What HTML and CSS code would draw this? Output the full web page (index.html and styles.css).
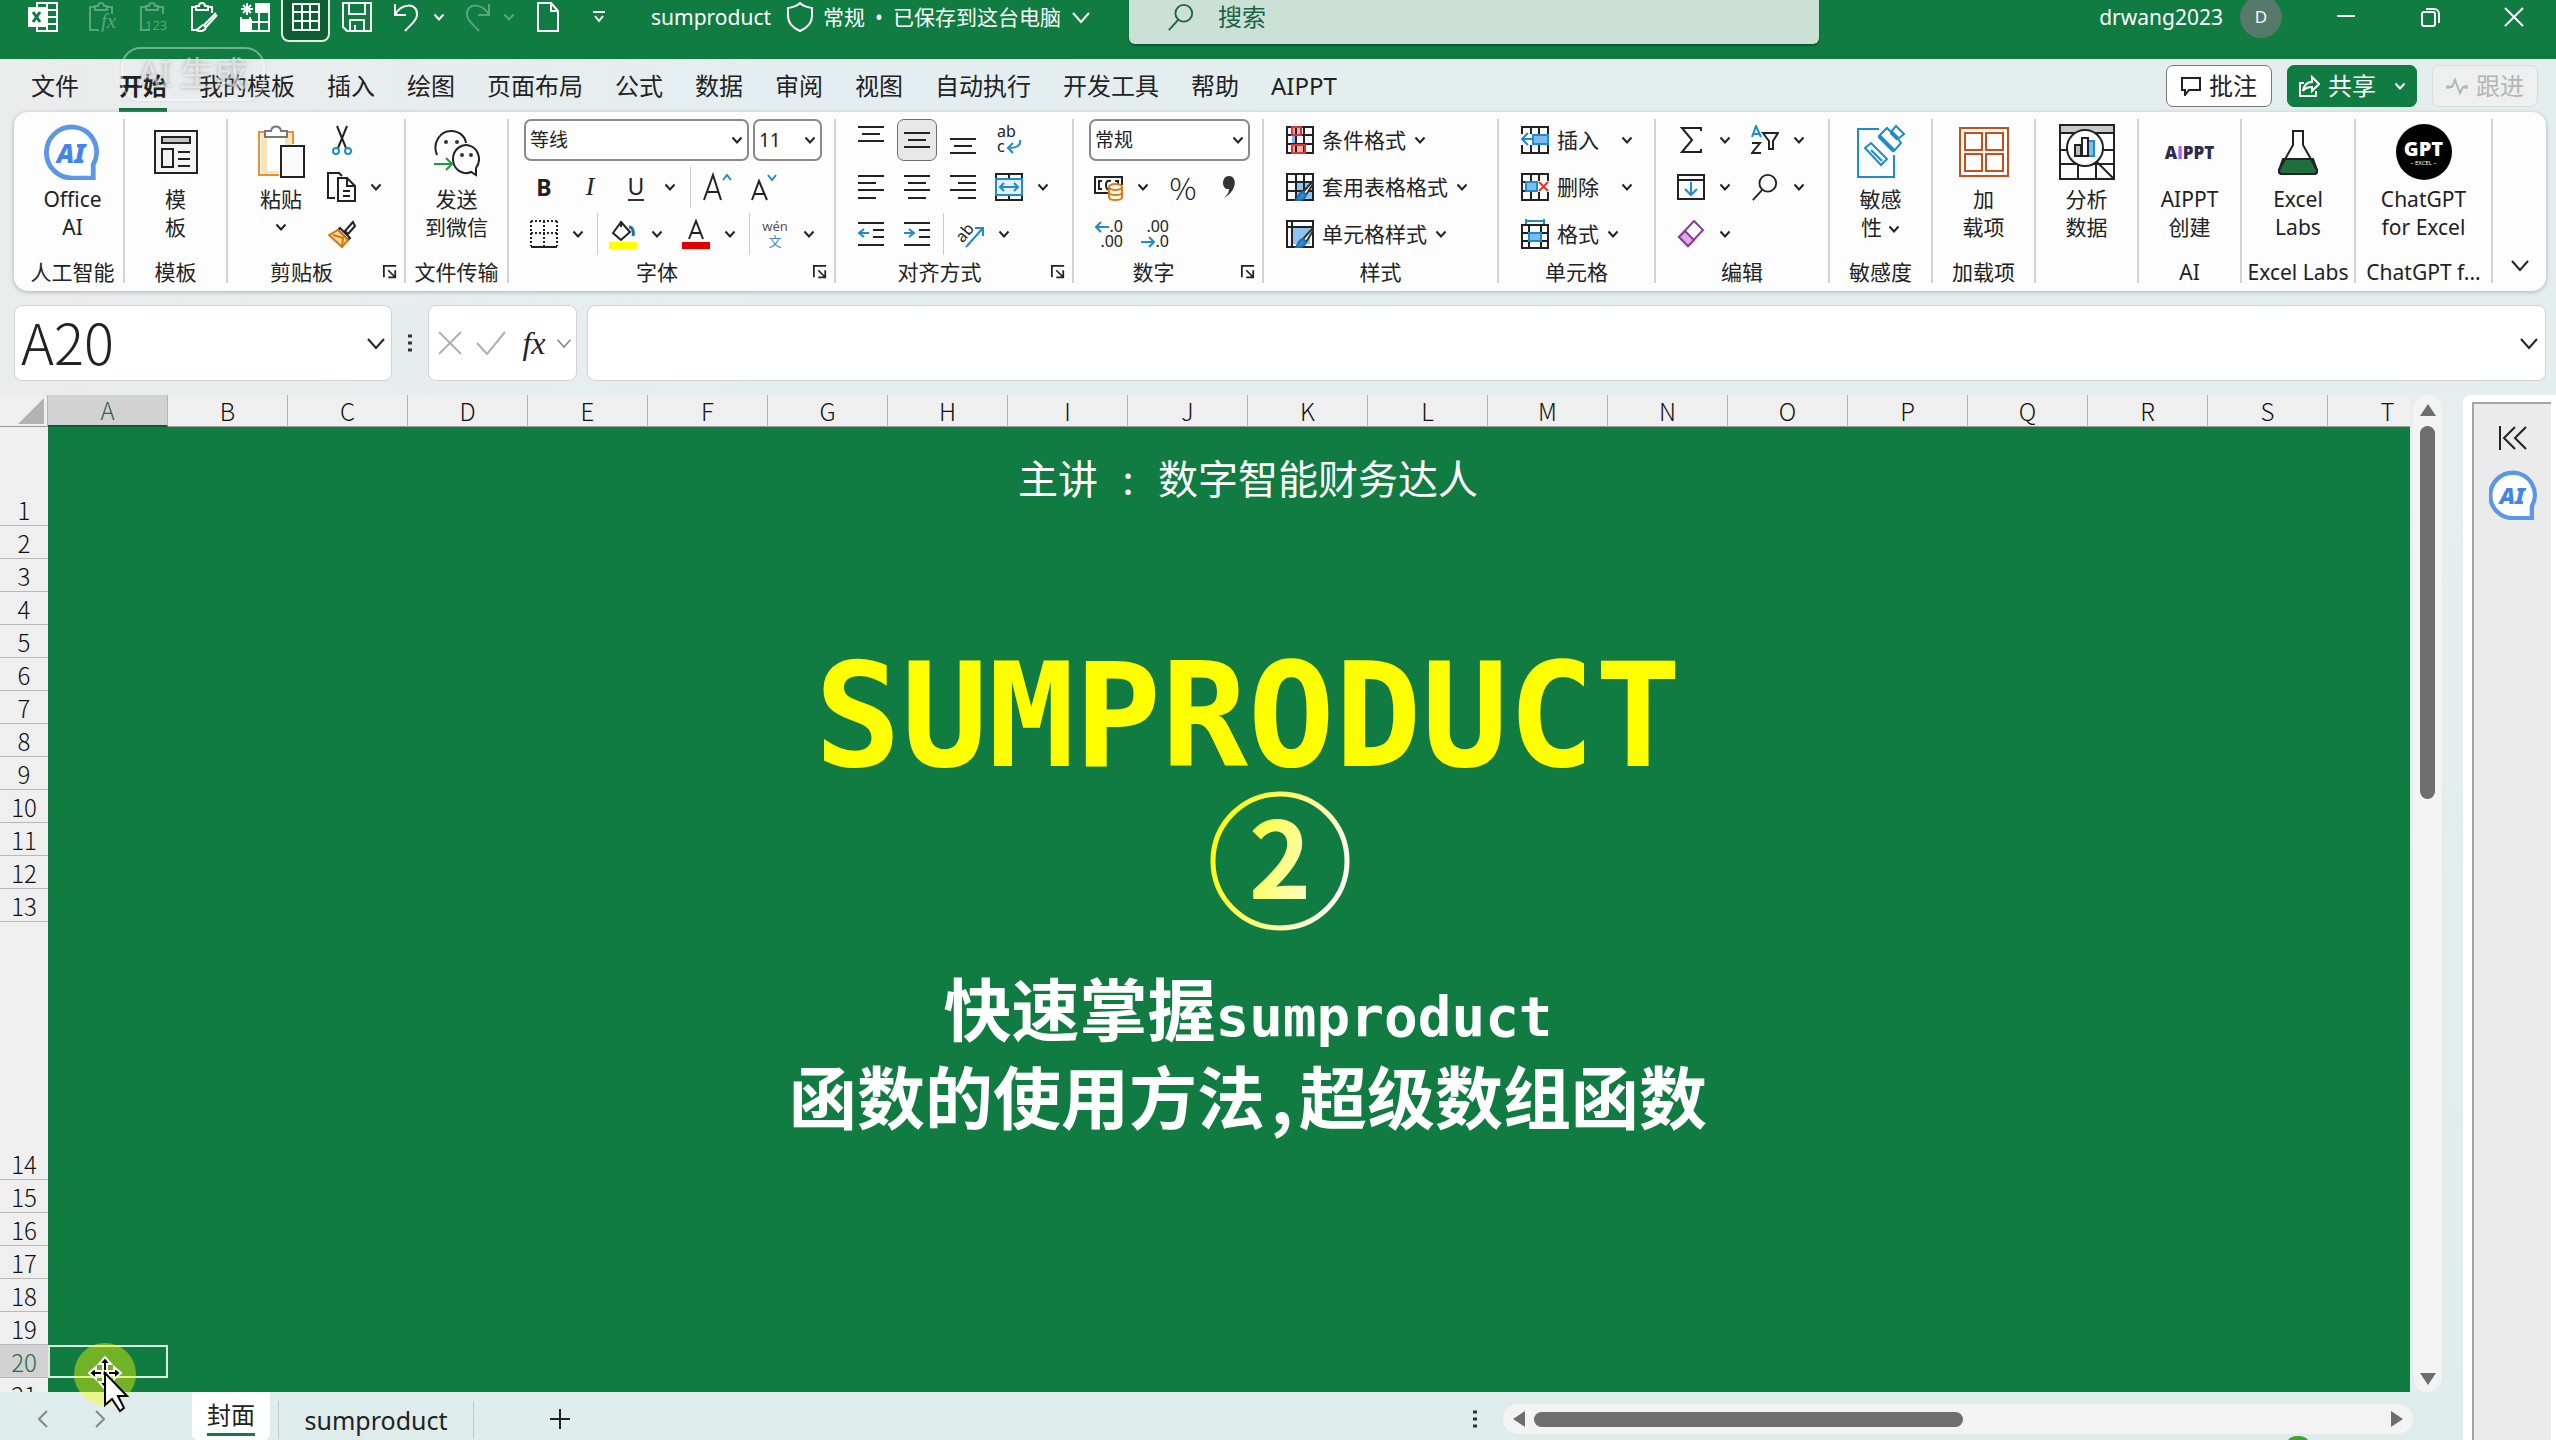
FILE: index.html
```html
<!DOCTYPE html>
<html lang="zh-CN">
<head>
    <meta charset="UTF-8">
    <title>sumproduct - Excel</title>
    <link rel="stylesheet" href="styles.css">
</head>
<body>

<svg class="defs" width="0" height="0" aria-hidden="true">
    <symbol id="chev" viewBox="0 0 12 12"><path d="M1.5 3.5 6 8.5l4.5-5"/></symbol>
    <symbol id="chev-big" viewBox="0 0 20 20"><path d="M2 6l8 9 8-9"/></symbol>
    <symbol id="launch" viewBox="0 0 16 16"><path d="M1 14V1h14M6 6l8 8M14 6v8H6"/></symbol>
    <symbol id="search" viewBox="0 0 28 30"><circle cx="17" cy="11" r="9"/><path d="M11 18 1 29"/></symbol>
    <symbol id="clip" viewBox="0 0 30 30"><path d="M8 5H3v23h9M20 5h5v7M8 8V4h3c0-4 6-4 6 0h3v4z"/></symbol>
    <symbol id="ai-logo" viewBox="0 0 56 58">
        <path d="M28 3a25 25 0 1 0 0 53h22V42A26 26 0 0 0 28 3z" fill="#fff" stroke="#5b97e8" stroke-width="5"/>
        <text x="27" y="40" text-anchor="middle" class="ai-logo-text">AI</text>
    </symbol>
    <symbol id="table-grid" viewBox="0 0 28 28"><path d="M1 1h26v26H1zM1 9h26M1 18h26M10 1v26M18 1v26"/></symbol>
    <symbol id="brush" viewBox="0 0 20 22"><path d="M18 2 9 12l3 3 7-11z" fill="#fff" stroke="#333"/><path d="M9 12c-4 0-4 4-7 8 5 1 9-1 10-5z" fill="#2e8ad0" stroke="#1f6fb0"/></symbol>
</svg>

<header class="titlebar">
    <div class="quick-access">
        <svg class="logo" viewBox="0 0 30 30" width="30" height="30"><path d="M9 1h20v28H9zM9 8h20M9 15h20M9 22h20M19 1v28" fill="none" stroke="#fff" stroke-width="2"/><path d="M0 6h17v18H0z" fill="#fff"/><path d="M5 10l7 10M12 10 5 20" stroke="#107c41" stroke-width="3"/></svg>
        <button class="dim" aria-label="粘贴公式"><svg width="30" height="30"><use href="#clip"/><text x="14" y="26" class="clip-fx">fx</text></svg></button>
        <button class="dim" aria-label="粘贴数值"><svg width="30" height="30"><use href="#clip"/><text x="7" y="28" class="clip-num">123</text></svg></button>
        <button aria-label="粘贴格式"><svg viewBox="0 0 30 30" width="30" height="30"><path d="M7 5H3v23h5M19 5h4v6M7 8V4h3c0-4 6-4 6 0h3v4zM27 11 15 23M28 13 17 25M15 23c-4 0-4 4-8 5 5 2 9 1 10-3z"/></svg></button>
        <button aria-label="冻结窗格"><svg viewBox="0 0 30 30" width="30" height="30"><path d="M15 2h14v27H1V15M1 20h28M10 15v14M19 10v19M15 10h14"/><path d="M16 2h13v8H16zM1 18h10v11H1z" fill="#fff"/><path d="M7 1v12M1 7h12M3 3l8 8M11 3l-8 8"/></svg></button>
        <button class="on" aria-label="网格"><svg width="28" height="28"><use href="#table-grid"/></svg></button>
        <button aria-label="保存"><svg viewBox="0 0 30 30" width="30" height="30"><path d="M1 1h28v28H5l-4-4zM7 1v11h16V1M8 29V18h14v11M13 29v-6"/></svg></button>
        <button class="split" aria-label="撤消"><svg viewBox="0 0 30 30" width="30" height="30"><path d="M3 2v11h11M3 13C8 1 26 0 25 13c0 6-7 10-12 16"/></svg><svg class="chev"><use href="#chev"/></svg></button>
        <button class="split dim" aria-label="恢复"><svg viewBox="0 0 30 30" width="30" height="30"><path d="M27 2v11H16M27 13C22 1 4 0 5 13c0 6 7 10 12 16"/></svg><svg class="chev"><use href="#chev"/></svg></button>
        <button aria-label="新建"><svg viewBox="0 0 22 30" width="22" height="30"><path d="M1 1h13l7 8v20H1zM14 1v8h7"/></svg></button>
        <button class="last" aria-label="自定义快速访问工具栏"><svg viewBox="0 0 14 14" width="14" height="14"><path d="M1 2h12M3 6l4 5 4-5"/></svg></button>
    </div>
    <div class="doc-name">
        <span>sumproduct</span>
        <svg viewBox="0 0 26 30" width="26" height="30"><path d="M13 1c4 4 7 4 12 5v8c0 8-5 12-12 15C6 26 1 22 1 14V6c5-1 8-1 12-5z"/></svg>
        <span>常规</span>
        <span>•</span>
        <span>已保存到这台电脑</span>
        <svg class="chev-big"><use href="#chev-big"/></svg>
    </div>
    <label class="search">
        <svg width="28" height="28"><use href="#search"/></svg>
        <input type="text" placeholder="搜索" aria-label="搜索">
    </label>
    <div class="account">
        <span>drwang2023</span>
        <span class="avatar">D</span>
    </div>
    <div class="window-controls">
        <button aria-label="最小化"><svg viewBox="0 0 20 20" width="20" height="20"><path d="M1 9h18"/></svg></button>
        <button aria-label="还原"><svg viewBox="0 0 20 20" width="20" height="20"><path d="M2 7a2 2 0 0 1 2-2h9a2 2 0 0 1 2 2v10a2 2 0 0 1-2 2H4a2 2 0 0 1-2-2zM6 2h8a5 5 0 0 1 5 5v9"/></svg></button>
        <button aria-label="关闭"><svg viewBox="0 0 20 20" width="20" height="20"><path d="M1 1l18 18M19 1 1 19"/></svg></button>
    </div>
</header>

<nav class="tabs">
    <button class="file">文件</button>
    <button class="active"><span>开始</span></button>
    <button>我的模板</button>
    <button>插入</button>
    <button>绘图</button>
    <button>页面布局</button>
    <button>公式</button>
    <button>数据</button>
    <button>审阅</button>
    <button>视图</button>
    <button>自动执行</button>
    <button>开发工具</button>
    <button>帮助</button>
    <button>AIPPT</button>
    <div class="actions">
        <button class="comments"><svg viewBox="0 0 20 20" width="20" height="20"><path d="M1 2h18v12H8l-4 5v-5H1z"/></svg>批注</button>
        <button class="share"><svg viewBox="0 0 22 22" width="22" height="22"><path d="M6 8H2v13h16v-5M5 16c1-6 4-9 9-9V2l7 7-7 7v-4c-4 0-7 1-9 4z"/></svg>共享<svg class="chev"><use href="#chev"/></svg></button>
        <button class="follow" disabled><svg viewBox="0 0 22 20" width="22" height="20"><path d="M2 11h4l3-7 5 13 3-6h3"/><circle cx="2" cy="11" r="1"/><circle cx="20" cy="11" r="1"/></svg>跟进</button>
    </div>
</nav>

<section class="ribbon">
    <div class="group g-ai">
        <div class="tools">
            <button class="large"><svg width="56" height="58"><use href="#ai-logo"/></svg><span>Office</span><span>AI</span></button>
        </div>
        <footer><span>人工智能</span></footer>
    </div>
    <div class="group g-template">
        <div class="tools">
            <button class="large"><svg viewBox="0 0 44 44" width="44" height="56"><path d="M1 1h42v42H1z" fill="#f4f4f4"/><path d="M8 7h28v6H8z" fill="#c4c4c4"/><path d="M8 19h11v18H8zM24 22h12M24 29h12M24 36h12"/></svg><span>模</span><span>板</span></button>
        </div>
        <footer><span>模板</span></footer>
    </div>
    <div class="group g-clipboard">
        <div class="tools">
            <button class="large paste"><svg viewBox="0 0 48 54" width="48" height="56"><path d="M8 7H2v43h20M30 7h6v12" stroke="#e8912d"/><path d="M8 9H4v39h18V22h12V9" fill="#fbe3b6" stroke="none"/><path d="M10 12h18v34H10z" fill="#fff" stroke="none"/><path d="M8 12V6h6c1-6 9-6 10 0h6v6z" fill="#fff" stroke="#777"/><path d="M24 21h23v31H24z" fill="#fafafa"/></svg><span>粘贴</span><svg class="chev"><use href="#chev"/></svg></button>
            <div class="rows">
                <div class="row"><button class="icon" aria-label="剪切"><svg viewBox="0 0 20 30" width="20" height="30"><path d="M5 1l9 22M15 1 6 23"/><circle cx="4" cy="26" r="3" stroke="#1e8bcd"/><circle cx="16" cy="26" r="3" stroke="#1e8bcd"/></svg></button></div>
                <div class="row"><button class="split" aria-label="复制"><svg viewBox="0 0 30 30" width="30" height="30"><path d="M8 26H1V1h11l3 3M11 6h9l8 8v15H11zM20 6v8h8M16 19h7M16 24h7"/></svg><svg class="chev"><use href="#chev"/></svg></button></div>
                <div class="row"><button class="icon" aria-label="格式刷"><svg viewBox="0 0 28 28" width="28" height="28"><path d="M25 2 17 11l3 3 7-8zM12 8l10 10-2 2L10 10z" fill="#fff"/><path d="M10 10 1 15l13 12 6-7z" fill="#fbd9a0" stroke="#d9760b"/><path d="M5 15l10 3-1 9" stroke="#d9760b"/></svg></button></div>
            </div>
        </div>
        <footer><span>剪贴板</span><button class="launch" aria-label="剪贴板选项"><svg width="14" height="14"><use href="#launch"/></svg></button></footer>
    </div>
    <div class="group g-wechat">
        <div class="tools">
            <button class="large"><svg viewBox="0 0 46 46" width="46" height="56"><path d="M3 26C-2 14 6 2 17 2c8 0 14 5 15 12"/><path d="M42 39a13 14 0 1 0-5 4l5 3z"/><path d="M0 35h17M12 29l6 6-6 6" stroke="#1d9b3f"/><g fill="#333" stroke="none"><circle cx="12" cy="13" r="2"/><circle cx="23" cy="13" r="2"/><circle cx="28" cy="26" r="2"/><circle cx="37" cy="26" r="2"/></g></svg><span>发送</span><span>到微信</span></button>
        </div>
        <footer><span>文件传输</span></footer>
    </div>
    <div class="group g-font">
        <div class="tools rows">
            <div class="row combos">
                <label class="combo font-name"><select aria-label="字体"><option>等线</option></select><svg class="chev"><use href="#chev"/></svg></label>
                <label class="combo font-size"><select aria-label="字号"><option>11</option></select><svg class="chev"><use href="#chev"/></svg></label>
            </div>
            <div class="row">
                <button class="icon bold">B</button>
                <button class="icon italic">I</button>
                <button class="split"><span class="underline">U</span><svg class="chev"><use href="#chev"/></svg></button>
                <i class="line"></i>
                <button class="icon" aria-label="增大字号"><svg viewBox="0 0 30 30" width="30" height="30"><path d="M2 28 11 3l8 25M5 20h12"/><path d="M21 8l4-5 4 5" stroke="#1e8bcd"/></svg></button>
                <button class="icon" aria-label="减小字号"><svg viewBox="0 0 30 30" width="30" height="30"><path d="M4 28 11 9l8 19M6 22h11"/><path d="M20 3l4 5 4-5" stroke="#1e8bcd"/></svg></button>
            </div>
            <div class="row tight">
                <button class="split" aria-label="边框"><svg viewBox="0 0 28 28" width="28" height="28"><path d="M1 1h26M1 13h26M1 1v25M14 1v25M27 1v25" stroke-dasharray="2 2"/><path d="M1 27h26"/></svg><svg class="chev"><use href="#chev"/></svg></button>
                <i class="line"></i>
                <button class="split" aria-label="填充颜色"><svg viewBox="0 0 28 30" width="28" height="30"><path d="M12 2v6M12 3l9 10-9 8-8-7 8-11z"/><path d="M20 8c4 0 5 5 4 9" stroke="#1f6fb0" stroke-width="3"/><path d="M0 23h28v7H0z" fill="#ff0" stroke="none"/></svg><svg class="chev"><use href="#chev"/></svg></button>
                <button class="split" aria-label="字体颜色"><svg viewBox="0 0 28 30" width="28" height="30"><path d="M7 20 14 2l7 18M9 14h10"/><path d="M0 23h28v7H0z" fill="#e00000" stroke="none"/></svg><svg class="chev"><use href="#chev"/></svg></button>
                <i class="line"></i>
                <button class="split"><span class="pinyin">wén<b>文</b></span><svg class="chev"><use href="#chev"/></svg></button>
            </div>
        </div>
        <footer><span>字体</span><button class="launch" aria-label="字体选项"><svg width="14" height="14"><use href="#launch"/></svg></button></footer>
    </div>
    <div class="group g-align">
        <div class="tools rows">
            <div class="row">
                <button class="icon" aria-label="顶端对齐"><svg viewBox="0 0 26 30" width="26" height="30"><path d="M0 2h26M4 9h18M0 16h26"/></svg></button>
                <button class="icon on" aria-label="垂直居中"><svg viewBox="0 0 26 30" width="26" height="30"><path d="M0 8h26M4 15h18M0 22h26"/></svg></button>
                <button class="icon" aria-label="底端对齐"><svg viewBox="0 0 26 30" width="26" height="30"><path d="M0 14h26M4 21h18M0 28h26"/></svg></button>
                <button class="icon" aria-label="自动换行"><svg viewBox="0 0 26 30" width="26" height="30"><text x="1" y="12" class="glyph">ab</text><text x="1" y="27" class="glyph">c</text><path d="M24 15c1 6-4 8-12 8M17 18l-5 5 5 5" stroke="#1e8bcd"/></svg></button>
            </div>
            <div class="row">
                <button class="icon" aria-label="左对齐"><svg viewBox="0 0 26 30" width="26" height="30"><path d="M0 4h26M0 11h18M0 18h26M0 26h18"/></svg></button>
                <button class="icon" aria-label="居中"><svg viewBox="0 0 26 30" width="26" height="30"><path d="M0 4h26M4 11h18M0 18h26M4 26h18"/></svg></button>
                <button class="icon" aria-label="右对齐"><svg viewBox="0 0 26 30" width="26" height="30"><path d="M0 4h26M8 11h18M0 18h26M8 26h18"/></svg></button>
                <button class="split" aria-label="合并后居中"><svg viewBox="0 0 28 28" width="28" height="28"><path d="M1 1h26v26H1zM14 1v5M14 22v5"/><path d="M1 6h26v16H1z" fill="#e3f1fb" stroke="#1e8bcd"/><path d="M5 14h18M9 10l-4 4 4 4M19 10l4 4-4 4" stroke="#1e8bcd"/></svg><svg class="chev"><use href="#chev"/></svg></button>
            </div>
            <div class="row">
                <button class="icon" aria-label="减少缩进"><svg viewBox="0 0 26 30" width="26" height="30"><path d="M0 4h26M15 11h11M15 18h11M0 26h26"/><path d="M1 14h10M6 10l-5 4 5 4" stroke="#1e8bcd"/></svg></button>
                <button class="icon" aria-label="增加缩进"><svg viewBox="0 0 26 30" width="26" height="30"><path d="M0 4h26M15 11h11M15 18h11M0 26h26"/><path d="M0 14h10M5 10l5 4-5 4" stroke="#1e8bcd"/></svg></button>
                <i class="line"></i>
                <button class="split" aria-label="方向"><svg viewBox="0 0 30 30" width="30" height="30"><text x="3" y="22" class="glyph" transform="rotate(-50 8 18)">ab</text><path d="M11 28 28 9M20 9h8v8" stroke="#1e8bcd"/></svg><svg class="chev"><use href="#chev"/></svg></button>
            </div>
        </div>
        <footer><span>对齐方式</span><button class="launch" aria-label="对齐选项"><svg width="14" height="14"><use href="#launch"/></svg></button></footer>
    </div>
    <div class="group g-number">
        <div class="tools rows">
            <div class="row combos">
                <label class="combo number-format"><select aria-label="数字格式"><option>常规</option></select><svg class="chev"><use href="#chev"/></svg></label>
            </div>
            <div class="row">
                <button class="split" aria-label="会计数字格式"><svg viewBox="0 0 30 28" width="30" height="28"><path d="M15 20H1V4h27v8M8 8H5v8h3M17 8c-4-1-5 1-5 4s1 5 3 4M21 8h3v4"/><path d="M15 14v10c0 4 13 4 13 0V14" fill="#fff" stroke="#e07b10"/><ellipse cx="21.500" cy="14" rx="6.500" ry="3" fill="#fff" stroke="#e07b10"/><path d="M15 19c0 4 13 4 13 0" stroke="#e07b10"/></svg><svg class="chev"><use href="#chev"/></svg></button>
                <button class="icon percent">%</button>
                <button class="icon" aria-label="千位分隔样式"><svg viewBox="0 0 14 24" width="14" height="24"><path d="M7 1c8 0 9 14-5 22 4-4 5-6 5-9C-1 15-1 1 7 1z" fill="#333" stroke="none"/></svg></button>
            </div>
            <div class="row">
                <button class="icon" aria-label="增加小数位数"><svg viewBox="0 0 28 30" width="28" height="30"><text x="28" y="13" text-anchor="end" class="glyph">.0</text><text x="28" y="28" text-anchor="end" class="glyph">.00</text><path d="M1 8h13M6 3 1 8l5 5" stroke="#1e8bcd"/></svg></button>
                <button class="icon" aria-label="减少小数位数"><svg viewBox="0 0 28 30" width="28" height="30"><text x="28" y="13" text-anchor="end" class="glyph">.00</text><text x="28" y="28" text-anchor="end" class="glyph">.0</text><path d="M0 23h13M8 18l5 5-5 5" stroke="#1e8bcd"/></svg></button>
            </div>
        </div>
        <footer><span>数字</span><button class="launch" aria-label="数字选项"><svg width="14" height="14"><use href="#launch"/></svg></button></footer>
    </div>
    <div class="group g-styles">
        <div class="tools rows">
            <div class="row"><button class="text"><svg viewBox="0 0 28 28" width="28" height="28"><path d="M6 1h9v8H6zM6 19h13v8H6z" fill="#f7a8a8" stroke="#d33"/><path d="M6 9h5v10H6z" fill="#7db7e8" stroke="none"/><use href="#table-grid"/><path d="M6 1h9v8H6zM6 19h13v8H6z" stroke="#d33"/></svg>条件格式<svg class="chev"><use href="#chev"/></svg></button></div>
            <div class="row"><button class="text"><svg viewBox="0 0 28 28" width="28" height="28"><path d="M9 9h18v18H9z" fill="#8cc3f0" stroke="none"/><use href="#table-grid"/><use href="#brush" x="8" y="7" width="20" height="22"/></svg>套用表格格式<svg class="chev"><use href="#chev"/></svg></button></div>
            <div class="row"><button class="text"><svg viewBox="0 0 28 28" width="28" height="28"><path d="M6 6h18v18H6z" fill="#8cc3f0" stroke="none"/><path d="M1 1h26v26H1zM1 7h26M6 1v26"/><use href="#brush" x="8" y="7" width="20" height="22"/></svg>单元格样式<svg class="chev"><use href="#chev"/></svg></button></div>
        </div>
        <footer><span>样式</span></footer>
    </div>
    <div class="group g-cells">
        <div class="tools rows">
            <div class="row"><button class="text wide"><svg viewBox="0 0 28 28" width="28" height="28"><use href="#table-grid"/><path d="M12 9h15v9H12z" fill="#7cbcf2" stroke="#1e8bcd"/><path d="M0 8h11v11H0z" fill="#fff" stroke="none"/><path d="M1 13h12M7 7l-6 6 6 6" stroke="#1e8bcd"/></svg>插入<svg class="chev"><use href="#chev"/></svg></button></div>
            <div class="row"><button class="text wide"><svg viewBox="0 0 28 28" width="28" height="28"><use href="#table-grid"/><path d="M5 9h11v9H5z" fill="#7cbcf2" stroke="#1e8bcd"/><path d="M17 8h11v11H17z" fill="#fff" stroke="none"/><path d="M18 9l9 9M27 9l-9 9" stroke="#d33"/></svg>删除<svg class="chev"><use href="#chev"/></svg></button></div>
            <div class="row"><button class="text"><svg viewBox="0 0 28 30" width="28" height="30"><path d="M1 6h26v23H1zM1 14h26M1 22h26M8 6v23M20 6v23"/><path d="M8 14h12v8H8z" fill="#7cbcf2" stroke="#1e8bcd"/><path d="M5 2h18M5 0v5M23 0v5" stroke="#1e8bcd"/></svg>格式<svg class="chev"><use href="#chev"/></svg></button></div>
        </div>
        <footer><span>单元格</span></footer>
    </div>
    <div class="group g-edit">
        <div class="tools rows">
            <div class="row">
                <button class="split" aria-label="自动求和"><svg viewBox="0 0 22 28" width="22" height="28"><path d="M21 5V2H2l10 12L2 26h19v-3"/></svg><svg class="chev"><use href="#chev"/></svg></button>
                <button class="split" aria-label="排序和筛选"><svg viewBox="0 0 28 30" width="28" height="30"><path d="M1 12 5 1l5 11M2 9h6" stroke="#1e8bcd"/><path d="M1 18h8L1 28h9M12 8h15l-5 8v8h-4v-8z"/></svg><svg class="chev"><use href="#chev"/></svg></button>
            </div>
            <div class="row">
                <button class="split" aria-label="填充"><svg viewBox="0 0 28 26" width="28" height="26"><path d="M1 1h26v24H1zM1 6h26"/><path d="M14 8v13M8 15l6 6 6-6" stroke="#1e8bcd"/></svg><svg class="chev"><use href="#chev"/></svg></button>
                <button class="split" aria-label="查找和选择"><svg width="28" height="28"><use href="#search"/></svg><svg class="chev"><use href="#chev"/></svg></button>
            </div>
            <div class="row">
                <button class="split" aria-label="清除"><svg viewBox="0 0 28 28" width="28" height="28"><path d="M17 1 26 10 11 26 2 17z" fill="#fff" stroke="#8e3a9d"/><path d="M8 11l9 9-6 6-9-9z" fill="#dfa8e6" stroke="#8e3a9d"/></svg><svg class="chev"><use href="#chev"/></svg></button>
            </div>
        </div>
        <footer><span>编辑</span></footer>
    </div>
    <div class="group g-single">
        <div class="tools">
            <button class="large"><svg class="blue" viewBox="0 0 48 56" width="48" height="56"><path d="M22 5H1v48h36V31"/><path d="M22 12l8-8 4 4 5-6 8 8-6 5 3 4-7 8z" fill="#fff"/><path d="M22 12l15 15M34 8l7 7" stroke-width="4"/><path d="M8 24l6-5 16 16-6 6zM14 26l11 11"/></svg><span>敏感</span><span>性<svg class="chev"><use href="#chev"/></svg></span></button>
        </div>
        <footer><span>敏感度</span></footer>
    </div>
    <div class="group g-single">
        <div class="tools">
            <button class="large"><svg class="orange" viewBox="0 0 50 50" width="50" height="56"><path d="M1 1h48v48H1zM6 6h17v17H6zM27 6h17v17H27zM6 27h17v17H6zM27 27h17v17H27z"/></svg><span>加</span><span>载项</span></button>
        </div>
        <footer><span>加载项</span></footer>
    </div>
    <div class="group g-single">
        <div class="tools">
            <button class="large"><svg viewBox="0 0 56 56" width="56" height="56"><path d="M1 1h54v54H1zM1 40h54M19 40v15M37 40v15M1 26h54"/><path d="M1 1h54v8H1z" fill="#c8c8c8"/><circle cx="26" cy="24" r="18" fill="#fff"/><path d="M16 21h6v11h-6z" fill="#bbb"/><path d="M29 17h6v15h-6z" fill="#7cbcf2" stroke="#1e8bcd"/><path d="M23 14h6v18h-6z" fill="#fff"/><path d="M38 38l17 17"/></svg><span>分析</span><span>数据</span></button>
        </div>
        <footer></footer>
    </div>
    <div class="group g-single">
        <div class="tools">
            <button class="large"><span class="aippt">A<b>i</b>PPT</span><span>AIPPT</span><span>创建</span></button>
        </div>
        <footer><span>AI</span></footer>
    </div>
    <div class="group g-labs">
        <div class="tools">
            <button class="large"><svg viewBox="0 0 40 46" width="40" height="56"><path d="M5 30h30l4 11c1 2-1 4-3 4H4c-2 0-4-2-3-4z" fill="#1f6f3d"/><path d="M15 2h10v14l14 25c1 2-1 4-3 4H4c-2 0-4-2-3-4l14-25z"/></svg><span>Excel</span><span>Labs</span></button>
        </div>
        <footer><span>Excel Labs</span></footer>
    </div>
    <div class="group g-gpt">
        <div class="tools">
            <button class="large"><span class="gpt">GPT<small>– EXCEL –</small></span><span>ChatGPT</span><span>for Excel</span></button>
        </div>
        <footer><span>ChatGPT f...</span></footer>
    </div>
    <button class="collapse" aria-label="折叠功能区"><svg class="chev-big"><use href="#chev-big"/></svg></button>
</section>

<section class="formula-bar">
    <label class="name-box"><input type="text" value="A20" aria-label="名称框"><svg class="chev-big"><use href="#chev-big"/></svg></label>
    <span class="dots"></span>
    <div class="fx-box">
        <button class="pale" aria-label="取消"><svg viewBox="0 0 24 24" width="24" height="24"><path d="M1 1l22 22M23 1 1 23"/></svg></button>
        <button class="pale" aria-label="输入"><svg viewBox="0 0 30 24" width="30" height="24"><path d="M1 12l10 11L29 1"/></svg></button>
        <button class="fx">fx</button>
        <svg class="chev-big"><use href="#chev-big"/></svg>
    </div>
    <label class="formula"><input type="text" aria-label="编辑栏"><svg class="chev-big"><use href="#chev-big"/></svg></label>
</section>

<main class="workspace">
    <div class="book">
        <div class="sheet-area">
            <div class="sheet">
                <table>
                    <colgroup><col class="row-head"><col span="20"></colgroup>
                    <thead>
                    <tr>
                        <th class="corner"><svg viewBox="0 0 28 28" width="28" height="28"><path d="M27 1v26H1z"/></svg></th>
                        <th class="selected">A</th><th>B</th><th>C</th><th>D</th><th>E</th><th>F</th><th>G</th><th>H</th><th>I</th><th>J</th>
                        <th>K</th><th>L</th><th>M</th><th>N</th><th>O</th><th>P</th><th>Q</th><th>R</th><th>S</th><th>T</th>
                    </tr>
                    </thead>
                    <tbody>
                    <tr class="tall-1"><th>1</th><td colspan="20" class="speaker">主讲 : 数字智能财务达人</td></tr>
                    <tr><th>2</th><td colspan="20" rowspan="12" class="headline">SUMPRODUCT</td></tr>
                    <tr><th>3</th></tr>
                    <tr><th>4</th></tr>
                    <tr><th>5</th></tr>
                    <tr><th>6</th></tr>
                    <tr><th>7</th></tr>
                    <tr><th>8</th></tr>
                    <tr><th>9</th></tr>
                    <tr><th>10</th></tr>
                    <tr><th>11</th></tr>
                    <tr><th>12</th></tr>
                    <tr><th>13</th></tr>
                    <tr class="tall-14"><th>14</th><td colspan="20" class="subtitle">快速掌握<span>sumproduct</span><br>函数的使用方法,超级数组函数</td></tr>
                    <tr><th>15</th><td colspan="20"></td></tr>
                    <tr><th>16</th><td colspan="20"></td></tr>
                    <tr><th>17</th><td colspan="20"></td></tr>
                    <tr><th>18</th><td colspan="20"></td></tr>
                    <tr><th>19</th><td colspan="20"></td></tr>
                    <tr><th class="selected">20</th><td class="current"></td><td colspan="19"></td></tr>
                    <tr><th>21</th><td colspan="20"></td></tr>
                    </tbody>
                </table>
                <svg class="wordart" viewBox="0 0 140 140" width="140" height="140">
                    <defs><linearGradient id="gold" gradientUnits="userSpaceOnUse" x1="0" y1="40" x2="140" y2="90"><stop offset="0" stop-color="#ffff00"/><stop offset="1" stop-color="#ffffff"/></linearGradient></defs>
                    <circle cx="70" cy="70" r="67" fill="none" stroke="url(#gold)" stroke-width="5"/>
                    <text x="70" y="108" text-anchor="middle" fill="url(#gold)">2</text>
                </svg>
            </div>
            <div class="vscroll">
                <svg viewBox="0 0 16 12" width="16" height="12"><path d="M8 0l8 12H0z"/></svg>
                <div class="thumb"></div>
                <svg class="end" viewBox="0 0 16 12" width="16" height="12"><path d="M8 12 16 0H0z"/></svg>
            </div>
        </div>
        <div class="sheet-bar">
            <button class="nav" aria-label="上一个"><svg viewBox="0 0 10 18" width="10" height="18"><path d="M9 1 1 9l8 8"/></svg></button>
            <button class="nav" aria-label="下一个"><svg viewBox="0 0 10 18" width="10" height="18"><path d="M1 1l8 8-8 8"/></svg></button>
            <button class="sheet-tab active"><span>封面</span></button>
            <button class="sheet-tab">sumproduct</button>
            <button class="add" aria-label="新工作表"><svg viewBox="0 0 20 20" width="20" height="20"><path d="M10 0v20M0 10h20"/></svg></button>
            <span class="dots"></span>
            <div class="hscroll">
                <svg viewBox="0 0 12 16" width="12" height="16"><path d="M0 8 12 0v16z"/></svg>
                <div class="thumb"></div>
                <svg class="end" viewBox="0 0 12 16" width="12" height="16"><path d="M12 8 0 0v16z"/></svg>
            </div>
        </div>
    </div>
    <aside class="side-pane">
        <div class="pane-inner">
            <button aria-label="展开"><svg viewBox="0 0 28 24" width="28" height="24"><path d="M1 0v24M16 1 5 12l11 11M27 1 16 12l11 11"/></svg></button>
            <button aria-label="Office AI"><svg width="48" height="50"><use href="#ai-logo"/></svg></button>
        </div>
    </aside>
    <div class="pointer">
        <svg viewBox="0 0 62 72" width="62" height="72">
            <circle cx="31" cy="31" r="31" fill="#ffff00" fill-opacity=".41"/>
            <path d="M31 14l6 7h-4v7h-4v-7h-4zM31 46l-6-7h4v-6h4v6h4zM15 30l7-6v4h6v4h-6v4zM47 30l-7-6v4h-6v4h6v4z" fill="#000" stroke="#fff"/>
            <path d="M31 30v32l7-6 8 12 4-3-6-12h9z" fill="#fff" stroke="#000"/>
        </svg>
    </div>
</main>

<div class="badge">AI 生成</div>
<span class="leaf"></span>

</body>
</html>
```
FILE: styles.css
```css
* {
    box-sizing: border-box;
}

body {
    display: flex;
    flex-direction: column;
    height: 100vh;
    margin: 0;
    overflow: hidden;
    background: linear-gradient(to right, #ebecec, #e4eef0 30%, #e4eeef);
    color: #222;
    font-family: "Noto Sans", "Noto Sans CJK SC", sans-serif;
    font-size: 21px;
    line-height: 28px;
}

button,
input,
select {
    margin: 0;
    padding: 0;
    border: 0;
    background: none;
    color: inherit;
    font: inherit;
}

button {
    display: flex;
    align-items: center;
    justify-content: center;
    white-space: nowrap;
}

svg {
    flex: none;
    fill: none;
    stroke: currentColor;
    stroke-width: 2;
}

svg text {
    fill: currentColor;
    stroke: none;
}

.defs {
    position: absolute;
}

.chev {
    width: 12px;
    height: 12px;
}

.chev-big {
    width: 20px;
    height: 20px;
}

.glyph {
    font-size: 16px;
}

.ai-logo-text {
    fill: #4285ea;
    font-size: 27px;
    font-style: italic;
    font-weight: 900;
}

/* title bar */
.titlebar {
    display: flex;
    flex: none;
    align-items: center;
    height: 85px;
    margin-top: -26px;
    background: #107c41;
    color: #fff;
}

.quick-access {
    display: flex;
    align-items: center;
    width: 651px;
}

.quick-access .logo {
    margin: 0 18px 0 28px;
}

.quick-access button {
    width: 51px;
    height: 50px;
}

.quick-access .split {
    width: 63px;
    margin-right: 7px;
    padding-left: 10px;
    justify-content: space-between;
}

.quick-access .dim {
    color: #58a57b;
}

.quick-access .on {
    width: 49px;
    margin: 0 1px;
    border: 2px solid #e0efe6;
    border-radius: 8px;
    background: #0c5f32;
}

.clip-fx {
    font: italic 21px "Liberation Serif", serif;
}

.clip-num {
    font-size: 13px;
}

.doc-name {
    display: flex;
    flex: 1;
    align-items: center;
    gap: 10px;
    white-space: nowrap;
}

.doc-name svg:first-of-type {
    margin-left: 6px;
}

.search {
    display: flex;
    flex: none;
    align-items: center;
    gap: 23px;
    width: 27%;
    height: 54px;
    margin-right: 280px;
    padding-left: 38px;
    border-radius: 6px;
    background: #cbe1d6;
    color: #1d6340;
    box-shadow: 0 2px 2px #0a5a2e;
}

.search input {
    flex: 1;
    font-size: 24px;
}

.search input::placeholder {
    color: #1d6340;
    opacity: 1;
}

.account {
    display: flex;
    align-items: center;
    gap: 17px;
    margin-right: 22px;
}

.avatar {
    width: 42px;
    height: 42px;
    border-radius: 50%;
    background: #56796c;
    font-size: 17px;
    line-height: 42px;
    text-align: center;
}

.window-controls {
    display: flex;
}

.window-controls button {
    width: 84px;
    height: 50px;
}

/* ribbon tabs */
.tabs {
    display: flex;
    flex: none;
    align-items: center;
    height: 53px;
    padding: 0 18px 0 15px;
    font-size: 24px;
}

.tabs > button {
    height: 53px;
    padding: 0 16px;
}

.tabs .file {
    margin-right: 8px;
}

.tabs .active {
    font-weight: 700;
}

.tabs .active span {
    margin-top: 8px;
    padding-bottom: 4px;
    border-bottom: 4px solid #0f703b;
    line-height: 36px;
}

.actions {
    display: flex;
    gap: 15px;
    margin-left: auto;
}

.actions button {
    gap: 8px;
    width: 106px;
    height: 42px;
    border: 1px solid #777;
    border-radius: 7px;
    background: #fff;
}

.actions .share {
    width: 130px;
    border-color: #107c41;
    background: #107c41;
    color: #fff;
}

.share .chev {
    margin-left: 10px;
}

.actions .follow {
    border-color: #d9dcdd;
    background: #eeefef;
    color: #b5b5b5;
}

/* ribbon */
.ribbon {
    display: flex;
    flex: none;
    margin: 0 10px 0 14px;
    padding: 7px 0 8px;
    border-radius: 14px;
    background: #fdfdfd;
    box-shadow: 0 1px 4px #a9b0b3;
}

.group {
    display: flex;
    flex: none;
    flex-direction: column;
    border-right: 2px solid #d3d3d3;
}

.g-ai { width: 111px; padding-left: 8px; }
.g-template { width: 103px; }
.g-clipboard { width: 178px; }
.g-wechat { width: 103px; }
.g-font { width: 327px; }
.g-align { width: 238px; }
.g-number { width: 190px; }
.g-styles { width: 235px; }
.g-cells { width: 157px; }
.g-edit { width: 174px; }
.g-single { width: 103px; }
.g-labs { width: 114px; }
.g-gpt { width: 137px; }

.tools {
    display: flex;
    justify-content: center;
    height: 142px;
}

.rows {
    display: flex;
    flex-direction: column;
    justify-content: flex-start;
    gap: 5px;
}

.tools.rows {
    padding-left: 15px;
}

.g-styles .tools,
.g-cells .tools {
    padding-left: 22px;
}

.row {
    display: flex;
    align-items: center;
    gap: 6px;
    height: 42px;
}

.row.tight {
    gap: 5px;
}

.row.combos {
    gap: 4px;
}

.row .line {
    width: 1px;
    height: 42px;
    background: #ccc;
}

.group footer {
    display: flex;
    align-items: center;
    height: 22px;
    white-space: nowrap;
}

.group footer span {
    flex: 1;
    text-align: center;
}

.launch {
    width: 29px;
    height: 22px;
}

.large {
    flex-direction: column;
    justify-content: flex-start;
    padding-top: 5px;
}

.large > svg:first-child {
    height: 56px;
    margin-bottom: 5px;
}

.large .chev {
    margin: 8px 0 0 6px;
}

.paste {
    width: 60px;
    margin-right: 11px;
}

.paste .chev {
    margin-left: 0;
}

.g-clipboard .tools {
    justify-content: flex-start;
    padding-left: 23px;
}

.icon,
.row .on {
    width: 40px;
    height: 42px;
}

.row .on {
    border: 1px solid #6d6d6d;
    border-radius: 7px;
    background: #e8e8e8;
}

.row .split {
    display: grid;
    grid-template-columns: 40px 28px;
    justify-items: center;
    height: 42px;
}

.row .text {
    gap: 8px;
}

.row .wide .chev {
    margin-left: 14px;
}

.bold {
    font-size: 23px;
    font-weight: 700;
}

.italic {
    font: italic 26px "Liberation Serif", serif;
}

.underline {
    border-bottom: 2px solid #333;
    font-size: 23px;
    line-height: 26px;
}

.percent {
    font-family: "Noto Sans CJK SC", sans-serif;
    font-size: 30px;
    font-weight: 300;
}

.pinyin {
    display: grid;
    justify-items: center;
    color: #555;
    font-size: 13px;
    line-height: 15px;
}

.pinyin b {
    color: #4a8db8;
    font-weight: 400;
}

.combo {
    display: flex;
    align-items: center;
    height: 42px;
    padding: 0 4px;
    border: 2px solid #8a8a8a;
    border-radius: 7px;
    background: #fff;
}

.combo select {
    flex: 1;
    min-width: 0;
    appearance: none;
    font-size: 19px;
}

.font-name { width: 225px; }
.font-size { width: 69px; }
.number-format { width: 161px; }

.blue { color: #1e8bcd; }
.orange { color: #c4501c; }

.aippt {
    height: 61px;
    color: #2d2a4a;
    font-size: 17px;
    font-weight: 900;
    line-height: 58px;
}

.aippt b {
    color: #a063f0;
}

.gpt {
    width: 56px;
    height: 56px;
    margin-bottom: 5px;
    padding-top: 15px;
    border-radius: 50%;
    background: #000;
    color: #fff;
    font-size: 20px;
    font-weight: 900;
    line-height: 20px;
}

.gpt small {
    display: block;
    font-size: 6px;
    font-weight: 400;
    line-height: 8px;
}

.collapse {
    flex: 1;
    align-items: flex-end;
    padding-bottom: 8px;
}

/* formula bar */
.formula-bar {
    display: flex;
    flex: none;
    padding: 14px 10px 14px 14px;
}

.name-box,
.fx-box,
.formula {
    display: flex;
    align-items: center;
    height: 76px;
    border: 1px solid #d0d3d4;
    border-radius: 8px;
    background: #fff;
}

.name-box {
    width: 378px;
    padding: 0 5px 0 6px;
}

.name-box input {
    flex: 1;
    min-width: 0;
    padding-bottom: 6px;
    font: 300 56px "Noto Sans CJK SC", sans-serif;
}

.dots {
    width: 36px;
    height: 20px;
    align-self: center;
    background: radial-gradient(circle, #333 2px, transparent 2px) center / 36px 7px;
}

.fx-box {
    gap: 14px;
    width: 149px;
    margin-right: 10px;
    padding: 0 0 0 9px;
}

.pale {
    color: #b0b0b0;
}

.fx {
    width: 28px;
    font: italic 32px "Liberation Serif", serif;
}

.fx-box .chev-big {
    width: 16px;
    margin-left: -6px;
    color: #888;
}

.formula {
    flex: 1;
    padding-right: 6px;
}

.formula input {
    flex: 1;
}

/* workbook */
.workspace {
    position: relative;
    display: flex;
    flex: 1;
    min-height: 0;
}

.book {
    display: flex;
    flex: 1;
    flex-direction: column;
    min-width: 0;
    padding-right: 21px;
    background: linear-gradient(#e9edee, #deedec);
}

.sheet-area {
    display: flex;
    flex: 1;
    gap: 3px;
    min-height: 0;
}

.sheet {
    position: relative;
    flex: 1;
    overflow: hidden;
    background: #107c41;
}

.sheet table {
    width: 2448px;
    table-layout: fixed;
    border-spacing: 0;
}

.row-head {
    width: 48px;
}

.sheet th,
.sheet td {
    padding: 0;
}

.sheet th {
    background: #efefef;
    color: #111;
    font-family: "Noto Sans CJK SC", sans-serif;
    font-size: 24px;
    font-weight: 300;
    line-height: 30px;
}

.sheet thead th {
    height: 32px;
    border-right: 1px solid #b5b5b5;
    border-bottom: 1px solid #9a9a9a;
}

.sheet thead .corner {
    padding-right: 2px;
    text-align: right;
}

.corner svg {
    display: block;
    margin-left: auto;
    fill: #b3b3b3;
    stroke: none;
}

.sheet tbody th {
    height: 33px;
    border-bottom: 1px solid #b8b8b8;
    vertical-align: bottom;
}

.sheet th.selected {
    background: #d2d2d2;
    color: #2c6a48;
}

.sheet thead th.selected {
    border-bottom: 2px solid #0e5c31;
}

.sheet .tall-1 th { height: 99px; }
.sheet .tall-14 th { height: 258px; }

.sheet td {
    color: #fff;
    font-family: "Noto Sans Mono CJK SC", "Noto Sans CJK SC", monospace;
    text-align: center;
}

.sheet .speaker {
    font-size: 40px;
    font-weight: 500;
    line-height: 50px;
}

.sheet .headline {
    padding-bottom: 16px;
    color: #ff0;
    font-family: "DejaVu Sans Mono", monospace;
    font-size: 144px;
    font-weight: 700;
    line-height: 180px;
}

.sheet .subtitle {
    font-size: 68px;
    font-weight: 700;
    line-height: 88px;
}

.subtitle span {
    font-family: "DejaVu Sans Mono", monospace;
    font-size: 56px;
    line-height: 56px;
}

.sheet .current {
    border: 2px solid #d9f0e2;
}

.wordart {
    position: absolute;
    top: 396px;
    left: 1210px;
}

.wordart text {
    fill: url(#gold);
    font: 700 106px "Noto Sans CJK SC", sans-serif;
}

.vscroll,
.hscroll {
    display: flex;
    align-items: center;
    border-radius: 15px;
    background: #f3f3f3;
}

.vscroll {
    flex-direction: column;
    gap: 10px;
    width: 29px;
    padding: 9px 0 7px;
}

.vscroll svg,
.hscroll svg {
    fill: #6e6e6e;
    stroke: none;
}

.thumb {
    border-radius: 8px;
    background: #6e6e6e;
}

.vscroll .thumb {
    width: 15px;
    height: 38%;
}

.vscroll .end {
    margin-top: auto;
}

.sheet-bar {
    display: flex;
    align-items: center;
    height: 48px;
    padding-left: 14px;
    font-size: 25px;
}

.nav {
    width: 57px;
    height: 48px;
    padding-top: 6px;
    color: #888;
}

.sheet-tab {
    width: 196px;
    height: 38px;
    margin-top: 8px;
    border-right: 1px solid #c2cccc;
}

.sheet-tab.active {
    width: 78px;
    height: 48px;
    margin: 0 8px 0 64px;
    border: 0;
    border-radius: 0 0 6px 6px;
    background: #fff;
    font-size: 24px;
}

.sheet-tab.active span {
    border-bottom: 3px solid #107c41;
    line-height: 36px;
}

.sheet-tab.active + .sheet-tab {
    border-left: 1px solid #c2cccc;
}

.add {
    width: 172px;
    height: 48px;
    padding-top: 6px;
}

.sheet-bar .dots {
    margin: 6px 10px 0 auto;
}

.hscroll {
    gap: 9px;
    width: 910px;
    height: 30px;
    margin: 6px 29px 0 0;
    padding: 0 10px;
}

.hscroll .thumb {
    width: 429px;
    height: 15px;
}

.hscroll .end {
    margin-left: auto;
}

.side-pane {
    width: 93px;
    padding: 7px 5px 0 9px;
    border-radius: 8px 0 0 0;
    background: #fff;
}

.pane-inner {
    display: flex;
    flex-direction: column;
    align-items: center;
    gap: 20px;
    height: 100%;
    padding-top: 22px;
    border-top: 2px solid #a5a5a5;
    border-left: 2px solid #a5a5a5;
    background: #ebebeb;
}

/* floating things */
.pointer {
    position: absolute;
    bottom: 25px;
    left: 74px;
}

.pointer svg {
    display: block;
    stroke: none;
}

.badge {
    position: absolute;
    top: 47px;
    left: 121px;
    width: 144px;
    height: 54px;
    border: 2px solid rgba(255, 255, 255, .4);
    border-radius: 20px;
    color: rgba(255, 255, 255, .5);
    font-size: 34px;
    line-height: 48px;
    text-align: center;
    text-shadow: 0 0 4px rgba(90, 100, 100, .5);
    box-shadow: 0 0 3px rgba(120, 130, 130, .2);
    white-space: nowrap;
}

.leaf {
    position: absolute;
    bottom: -6px;
    left: 2288px;
    width: 20px;
    height: 10px;
    border-radius: 50%;
    background: #3fa535;
}
```
